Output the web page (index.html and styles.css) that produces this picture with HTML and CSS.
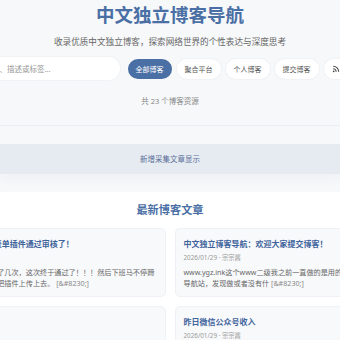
FILE: index.html
```
<!DOCTYPE html>
<html lang="zh-CN">
<head>
    <meta charset="UTF-8">
    <meta name="viewport" content="width=device-width, initial-scale=1.0">
    <title>中文独立博客导航</title>
    <link rel="stylesheet" href="styles.css">
</head>
<body>
    <header class="hero">
        <h1 class="site-title">中文独立博客导航</h1>
        <p class="tagline">收录优质中文独立博客，探索网络世界的个性表达与深度思考</p>

        <div class="filters">
            <input type="text" class="search" placeholder="搜索名称、描述或标签...">
            <button class="pill active">全部博客</button>
            <button class="pill">聚合平台</button>
            <button class="pill">个人博客</button>
            <button class="pill">提交博客</button>
            <button class="pill">
                <svg class="rss-icon" viewBox="0 0 24 24" width="8" height="8">
                    <circle cx="5" cy="19" r="2.6" fill="#444"/>
                    <path d="M3.5 11.5a9 9 0 0 1 9 9" fill="none" stroke="#444" stroke-width="3.2"/>
                    <path d="M3.5 4a16.5 16.5 0 0 1 16.5 16.5" fill="none" stroke="#444" stroke-width="3.2"/>
                </svg>
                RSS 订阅
            </button>
        </div>

        <p class="count">共 23 个博客资源</p>
    </header>

    <div class="notice">
        <div class="notice-bar">新增采集文章显示</div>
    </div>

    <section class="latest">
        <h2>最新博客文章</h2>
        <div class="grid-wrap">
            <div class="post-grid">
                <article class="post">
                    <h3 class="post-title">我的第一个WordPress表单插件通过审核了！</h3>
                    <p class="post-meta">2026/01/29 · 宗宗酱</p>
                    <p class="post-excerpt">这款表单插件前后提交审核了几次，这次终于通过了！！！然后下班马不停蹄地打开电脑，登录到后台，把插件上传上去。 <span class="more">[&amp;#8230;]</span></p>
                </article>
                <article class="post">
                    <h3 class="post-title">中文独立博客导航：欢迎大家提交博客！</h3>
                    <p class="post-meta">2026/01/29 · 宗宗酱</p>
                    <p class="post-excerpt">www.ygz.ink这个www二级我之前一直做的是用的MediaWiki搭建的个人博客导航站，发现做或者没有什 <span class="more">[&amp;#8230;]</span></p>
                </article>
                <article class="post">
                    <h3 class="post-title">新年计划</h3>
                    <p class="post-meta">2026/01/28 · 宗宗酱</p>
                    <p class="post-excerpt">新的一年，给自己列一个小小的计划清单。 <span class="more">[&amp;#8230;]</span></p>
                </article>
                <article class="post">
                    <h3 class="post-title">昨日微信公众号收入</h3>
                    <p class="post-meta">2026/01/29 · 宗宗酱</p>
                    <p class="post-excerpt">记录一下昨天公众号的流量主收入情况。 <span class="more">[&amp;#8230;]</span></p>
                </article>
            </div>
        </div>
    </section>
</body>
</html>
```

FILE: styles.css
```
body {
    margin: 0;
    font-family: "Noto Sans", "Noto Sans CJK SC", sans-serif;
    background: white;
    overflow: hidden;
}

.hero {
    background: #f7f8fa;
    padding: 3px 0 18px;
    border-bottom: 1px solid #eceef2;
    text-align: center;
}

.site-title {
    margin: 0;
    font-size: 18.5px;
    line-height: 23px;
    font-weight: bold;
    color: #4a6fa5;
}

.tagline {
    margin: 10px 0 0;
    font-size: 8.6px;
    line-height: 12px;
    color: #666;
}

.filters {
    display: flex;
    justify-content: center;
    align-items: center;
    gap: 5px;
    margin-top: 9px;
}

.search {
    flex: none;
    width: 158px;
    height: 23px;
    box-sizing: border-box;
    margin-right: 3px;
    padding: 0 8px;
    border: none;
    border-radius: 12px;
    background: white;
    box-shadow: 0 0 0 1px #f0f2f5;
    font-family: inherit;
    font-size: 7.5px;
    color: #333;
    outline: none;
}

.search::placeholder {
    color: #999;
}

.pill {
    flex: none;
    display: flex;
    align-items: center;
    gap: 3px;
    height: 20px;
    padding: 0 8px;
    border: none;
    border-radius: 10px;
    background: white;
    box-shadow: 0 0 0 1px #f1f2f5;
    font-family: inherit;
    font-size: 7px;
    color: #555;
}

.pill.active {
    background: #4a6fa5;
    box-shadow: none;
    color: white;
}

.count {
    margin: 15.5px 0 0;
    font-size: 7.5px;
    line-height: 11px;
    color: #888;
}

.notice {
    background: #f7f8fa;
    padding: 18px 0;
}

.notice-bar {
    height: 30px;
    line-height: 30px;
    background: #e6eaf1;
    box-shadow: 0 6px 10px rgba(60, 80, 120, 0.04);
    text-align: center;
    font-size: 7.5px;
    color: #5b7099;
}

.latest {
    background: white;
    padding: 10px 0 20px;
}

.latest h2 {
    margin: 0 0 10px;
    text-align: center;
    font-size: 11.2px;
    line-height: 16px;
    color: #4a6fa5;
}

.grid-wrap {
    display: flex;
    justify-content: center;
}

.post-grid {
    flex: none;
    display: grid;
    grid-template-columns: 263px 263px;
    gap: 9px;
}

.post {
    box-sizing: border-box;
    padding: 9px 8px 6px;
    background: #f8f9fb;
    border: 1px solid #eef1f5;
    border-radius: 5px;
}

.post-title {
    margin: 0;
    font-size: 8px;
    line-height: 11px;
    font-weight: bold;
    color: #3f639b;
}

.post-meta {
    margin: 4px 0 0;
    font-size: 6.3px;
    line-height: 9px;
    color: #999;
}

.post-excerpt {
    margin: 5px 0 0;
    font-size: 7.15px;
    line-height: 11.5px;
    color: #666;
}

.more {
    color: #888;
}
```
